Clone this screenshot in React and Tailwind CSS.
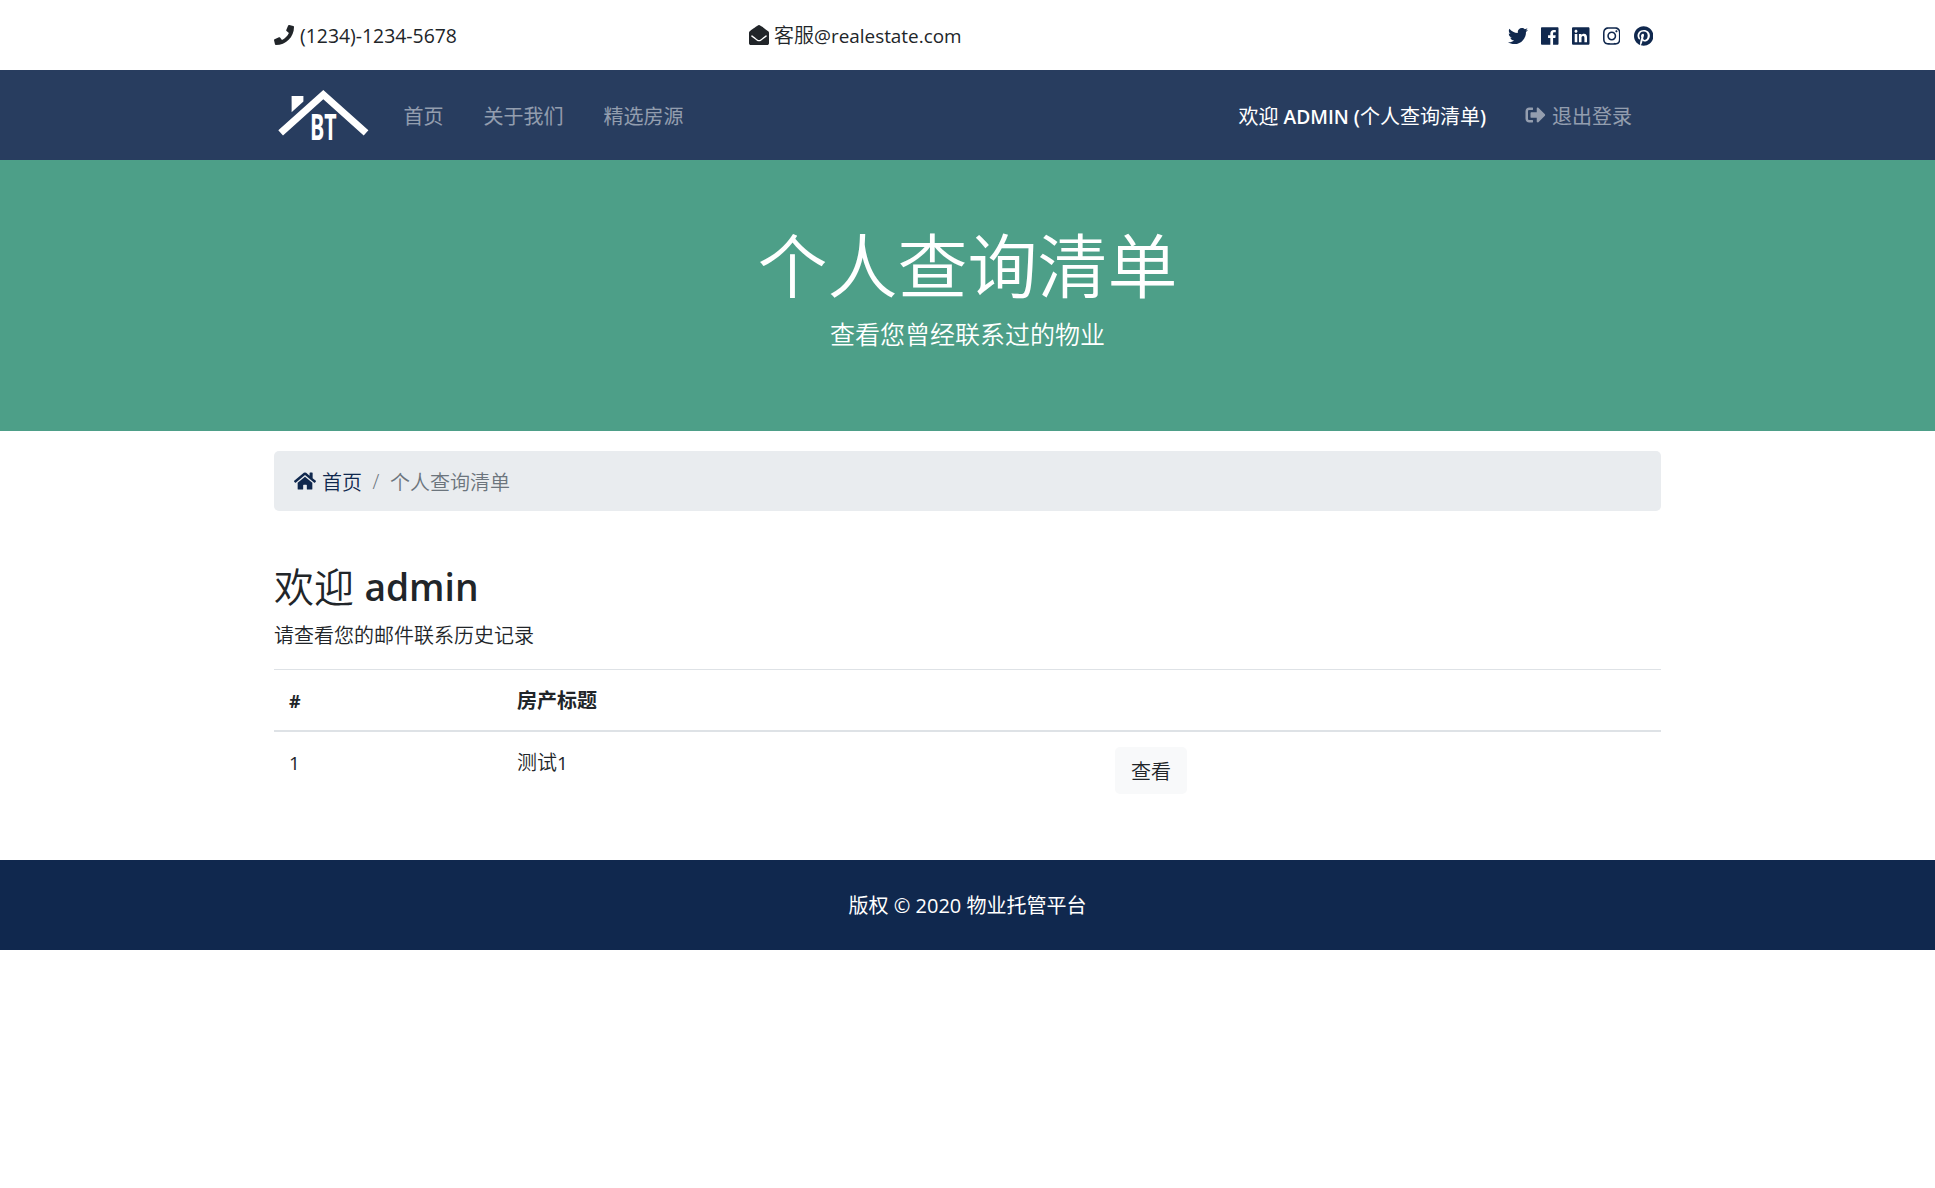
import React from "react";
import {
  FaPhone,
  FaEnvelopeOpen,
  FaTwitter,
  FaLinkedin,
  FaInstagram,
  FaPinterest,
  FaSignOutAlt,
  FaHome,
} from "react-icons/fa";

const SquareFacebook = ({ className }) => (
  <svg viewBox="0 0 448 512" fill="currentColor" className={className}>
    <path d="M448 56.7v398.5c0 13.7-11.1 24.7-24.7 24.7H309.1V306.5h58.2l8.7-67.6h-67v-43.2c0-19.6 5.4-32.9 33.5-32.9h35.8v-60.5c-6.2-.8-27.4-2.7-52.2-2.7-51.6 0-87 31.5-87 89.4v49.9h-58.4v67.6h58.4V480H24.7C11.1 480 0 468.9 0 455.3V56.7C0 43.1 11.1 32 24.7 32h398.5c13.7 0 24.8 11.1 24.8 24.7z" />
  </svg>
);

const Logo = () => (
  <svg viewBox="0 0 100 70" className="block h-[70px] w-[100px]" fill="#fff">
    <path d="M49.3 10 L94.4 50.3 L89.7 55.6 L49.3 19.2 L9 55.6 L4.3 50.3 Z" />
    <path d="M17.6 16 H29.4 V21.6 L17.6 32.3 Z" />
    <text
      transform="translate(35.9 60.4) scale(0.61 1)"
      fontFamily="'Open Sans', sans-serif"
      fontWeight="700"
      fontSize="35"
    >
      BT
    </text>
  </svg>
);

const Wrap = ({ className = "", children }) => (
  <div className={`mx-auto w-[1387px] ${className}`}>{children}</div>
);

export default function App() {
  return (
    <div className="min-h-screen bg-white font-['Open_Sans','Noto_Sans_CJK_SC',sans-serif] text-[20px] leading-[30px] text-[#212529]">
      <header className="h-[70px]">
        <Wrap className="flex h-full items-center">
          <div className="flex w-[475px] items-center gap-[6px]">
            <FaPhone className="size-5" />
            <span className="pt-[2px] text-[19.4px]">(1234)-1234-5678</span>
          </div>
          <div className="flex flex-1 items-center gap-[5px]">
            <FaEnvelopeOpen className="size-5" />
            <span className="flex items-center pt-[2px] font-[350]">
              客服<span className="text-[18.9px] font-normal">@realestate.com</span>
            </span>
          </div>
          <div className="flex items-center gap-[13.3px] pr-2 pt-px text-[#10284e]">
            <FaTwitter className="size-5" />
            <SquareFacebook className="h-5 w-[17.5px]" />
            <FaLinkedin className="h-5 w-[17.5px]" />
            <FaInstagram className="h-5 w-[17.5px]" />
            <FaPinterest className="h-5 w-[19.4px]" />
          </div>
        </Wrap>
      </header>

      <nav className="h-[90px] bg-[#283d5f]">
        <Wrap className="flex h-full items-center justify-between pr-[29px] text-white/50">
          <div className="flex items-center">
            <Logo />
            <div className="ml-[29.5px] flex gap-10 pt-[3px]">
              <a>首页</a>
              <a>关于我们</a>
              <a>精选房源</a>
            </div>
          </div>
          <div className="flex items-center gap-[39px]">
            <a className="flex items-center whitespace-pre pt-[3px] text-white">
              欢迎<span className="text-[19.2px] font-semibold"> ADMIN (</span>个人查询清单<span className="text-[19.2px] font-semibold">)</span>
            </a>
            <a className="flex items-center gap-[6px]">
              <FaSignOutAlt className="h-5 w-[21px]" />
              <span className="pt-[3px]">退出登录</span>
            </a>
          </div>
        </Wrap>
      </nav>

      <section className="h-[271px] bg-[#4d9f88] pt-[64px] text-center font-[350] text-white">
        <h1 className="text-[70px] leading-[84px]">个人查询清单</h1>
        <p className="mt-[7px] text-[25px] leading-[38px]">查看您曾经联系过的物业</p>
      </section>

      <Wrap className="pt-5 font-[350]">
        <div className="flex h-[60px] items-center rounded-[5px] bg-[#e9ecef] px-5">
          <a className="flex items-center gap-[6px] text-[#10284e]">
            <FaHome className="h-5 w-[22px]" />
            <span className="pt-[3px]">首页</span>
          </a>
          <span className="w-[28px] pt-[2px] text-center text-[#6c757d]">/</span>
          <span className="pt-[3px] text-[#6c757d]">个人查询清单</span>
        </div>

        <h2 className="mt-[52px] flex h-12 items-center whitespace-pre text-[40px] leading-[48px]">
          欢迎 <span className="text-[37.2px] font-semibold">admin</span>
        </h2>
        <p className="mt-[10px]">请查看您的邮件联系历史记录</p>

        <div className="mt-[18px] grid h-[61px] grid-cols-[228px_598px_1fr] items-center border-t border-[#dee2e6] pt-[2px] font-bold">
          <span className="pl-[15px] text-[18px]">#</span>
          <span className="pl-[15px]">房产标题</span>
        </div>
        <div className="grid h-[130px] grid-cols-[228px_598px_1fr] items-start border-t-2 border-[#dee2e6] pt-[15px]">
          <span className="pl-[15px] pt-px text-[19px] font-normal">1</span>
          <span className="flex items-center pl-[15px] pt-px">
            测试<span className="text-[19px] font-normal">1</span>
          </span>
          <button className="ml-[15px] flex h-[47px] w-[72px] items-center justify-center rounded-[5px] bg-[#f8f9fa] pt-[2px]">
            查看
          </button>
        </div>
      </Wrap>

      <footer className="flex h-[90px] items-center justify-center whitespace-pre bg-[#10284e] pt-[2px] text-white">
        版权<span className="text-[20px]"> © 2020 </span>物业托管平台
      </footer>
    </div>
  );
}
